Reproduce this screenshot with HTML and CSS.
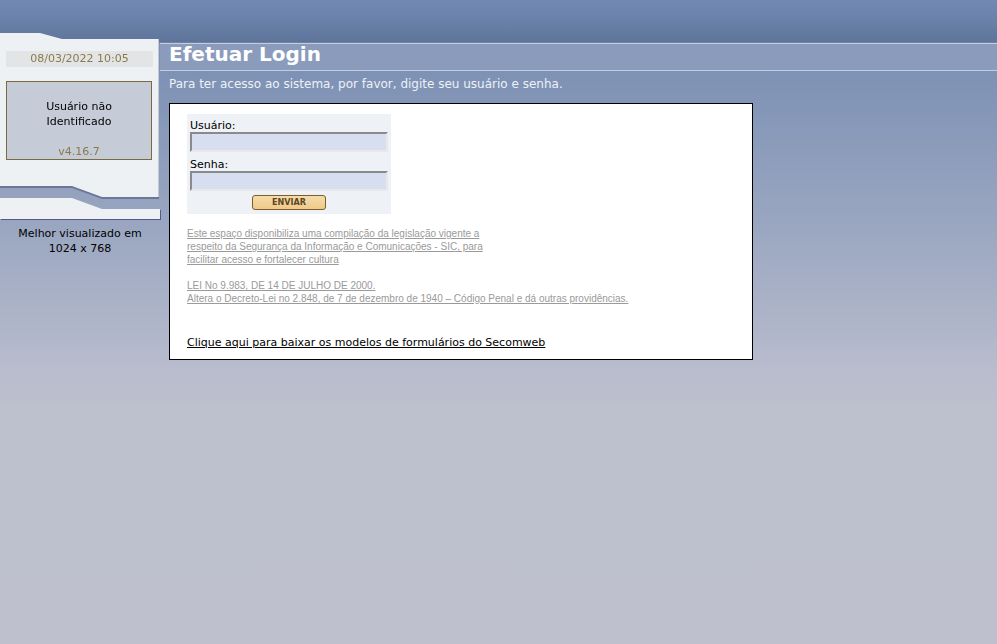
FILE: index.html
```html
<!DOCTYPE html>
<html lang="pt-BR">
<head>
<meta charset="utf-8">
<title>Efetuar Login</title>
<link rel="stylesheet" href="styles.css">
</head>
<body>
<div class="page">
  <aside class="sidebar">
    <div class="panel-wrap">
      <div class="side-panel">
        <div class="date-box">08/03/2022 10:05</div>
        <div class="user-box">
          <div class="user-name">Usuário não<br>Identificado</div>
          <div class="version">v4.16.7</div>
        </div>
      </div>
    </div>
    <div class="foot-wrap">
      <div class="side-foot"></div>
    </div>
    <p class="best-view">Melhor visualizado em<br>1024 x 768</p>
  </aside>

  <main class="main">
    <h1 class="title-band">Efetuar Login</h1>
    <p class="intro">Para ter acesso ao sistema, por favor, digite seu usuário e senha.</p>
    <section class="login-box">
      <form class="login-form">
        <label class="field-label" for="user">Usuário:</label>
        <input class="field-input" id="user" type="text">
        <label class="field-label" for="pass">Senha:</label>
        <input class="field-input" id="pass" type="password">
        <div class="btn-row"><button type="button" class="btn-send">ENVIAR</button></div>
      </form>
      <div class="legal">
        <a href="#">Este espaço disponibiliza uma compilação da legislação vigente a<br>respeito da Segurança da Informação e Comunicações - SIC, para<br>facilitar acesso e fortalecer cultura</a>
        <br><br>
        <a href="#">LEI No 9.983, DE 14 DE JULHO DE 2000.<br>Altera o Decreto-Lei no 2.848, de 7 de dezembro de 1940 – Código Penal e dá outras providências.</a>
      </div>
      <a class="download" href="#">Clique aqui para baixar os modelos de formulários do Secomweb</a>
    </section>
  </main>
</div>
</body>
</html>
```

FILE: styles.css
```css
html, body {
  margin: 0;
  padding: 0;
}

body {
  min-height: 100vh;
  font-family: "DejaVu Sans", Verdana, sans-serif;
  font-size: 11px;
  color: #000;
  background:
    linear-gradient(180deg,
      #7189b3 0px,
      #6b83ab 18px,
      #5f7499 42px,
      #7d91b4 43px,
      #7e92b5 75px,
      #9ba7c1 230px,
      #b8bccd 370px,
      #bdc0cd 410px,
      #bec0cd 100%);
}

.page {
  display: flex;
  align-items: flex-start;
}

/* ---------- sidebar ---------- */
.sidebar {
  width: 160px;
  flex: 0 0 160px;
  margin-top: 33px;
}

.panel-wrap {
  filter: drop-shadow(0 2px 0 rgba(78, 80, 128, 0.55));
}

.side-panel {
  height: 164px;
  box-sizing: border-box;
  padding-top: 18px;
  background: linear-gradient(90deg, #eef1f4 158px, #c3c9d3 158px);
  clip-path: polygon(0 0, 40px 0, 62px 6px, 159px 6px, 159px 164px, 102px 164px, 72px 153px, 0 153px);
}

.date-box {
  margin: 0 7px 0 6px;
  height: 16px;
  line-height: 16px;
  background: #e2e4e5;
  color: #8b7a4b;
  text-align: center;
}

.user-box {
  margin: 14px 8px 0 6px;
  height: 79px;
  box-sizing: border-box;
  border: 1px solid #7a6a3f;
  background: #c5cbd7;
  text-align: center;
  padding-top: 17px;
  line-height: 15px;
}

.version {
  margin-top: 15px;
  color: #8b7a4b;
}

.foot-wrap {
  margin-top: -11px;
  filter: drop-shadow(1px 1px 0 #545a8c);
}

.side-foot {
  height: 34px;
  background: #eef1f4;
  clip-path: polygon(0 12px, 72px 12px, 102px 23px, 160px 23px, 160px 33px, 0 33px);
}

.best-view {
  margin: 6px 0 0;
  text-align: center;
  line-height: 15px;
}

/* ---------- main ---------- */
.main {
  flex: 1;
  margin-top: 43px;
}

.title-band {
  margin: 0;
  height: 26px;
  padding-left: 9px;
  border-top: 1px solid #c3cde2;
  border-bottom: 1px solid #c3cde2;
  background: #8a9bbc;
  color: #fff;
  font-size: 20px;
  font-weight: bold;
  line-height: 20px;
}

.intro {
  margin: 6px 0 0;
  padding-left: 9px;
  font-size: 12px;
  line-height: 15px;
  color: #eef1f7;
}

.login-box {
  margin: 11px 0 0 9px;
  width: 584px;
  height: 257px;
  box-sizing: border-box;
  border: 1px solid #000;
  background: #fff;
  padding: 10px 0 0 17px;
}

.login-form {
  width: 204px;
  box-sizing: border-box;
  padding: 0 3px 4px;
  background: #eef1f5;
}

.field-label {
  display: block;
  height: 18px;
  box-sizing: border-box;
  padding-top: 6px;
  line-height: 11px;
  font-size: 11px;
}

.field-input {
  display: block;
  width: 198px;
  height: 20px;
  margin: 0 0 1px;
  box-sizing: border-box;
  border: 2px solid;
  border-color: #8a8a8a #e8e8e8 #e8e8e8 #8a8a8a;
  background: #d6deef;
  padding: 0;
}

.btn-row {
  margin-top: 4px;
  display: flex;
  justify-content: center;
}

.btn-send {
  width: 74px;
  height: 15px;
  padding: 0;
  border: 1px solid #7c5f28;
  border-radius: 3px;
  background: linear-gradient(180deg, #f6dcaa 0%, #efc988 100%);
  color: #5a4826;
  font-family: "DejaVu Sans Condensed", "DejaVu Sans", sans-serif;
  font-size: 9px;
  font-weight: bold;
  line-height: 13px;
}

.legal {
  margin-top: 13px;
  font-family: "Liberation Sans", Arial, sans-serif;
  font-size: 10px;
  line-height: 13px;
}

.legal a {
  color: #9a9a9a;
}

.download {
  display: inline-block;
  margin-top: 31px;
  color: #000;
  font-size: 11px;
  line-height: 14px;
}
```
